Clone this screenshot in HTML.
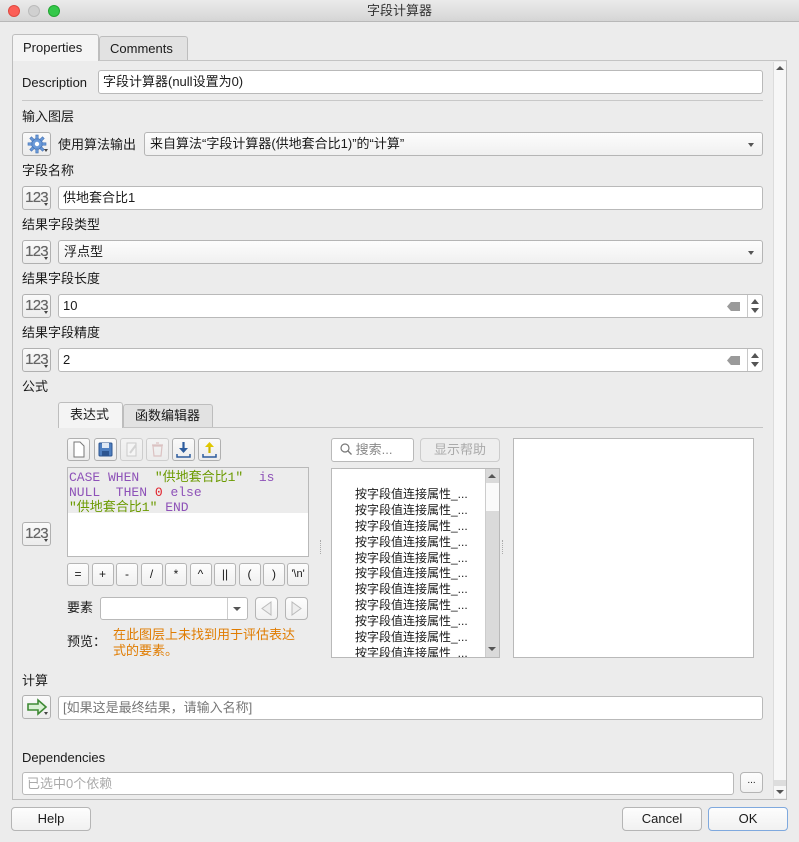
<!DOCTYPE html>
<html><head><meta charset="utf-8"><style>
*{box-sizing:border-box;margin:0;padding:0}
body{width:799px;height:842px;background:#ececec;font-family:"Liberation Sans","Noto Sans CJK SC",sans-serif;font-size:13px;color:#1a1a1a;position:relative;overflow:hidden}
.a{position:absolute}
.lbl{position:absolute;font-size:13px;line-height:16px;white-space:nowrap}
.in{position:absolute;background:#fff;border:1px solid #b9b9b9;border-radius:3px;height:24px;padding-left:4px;line-height:22px;font-size:13px;white-space:nowrap;overflow:hidden}
.cb{position:absolute;background:linear-gradient(#fdfdfd,#f0f0f0);border:1px solid #b5b5b5;border-radius:3px;height:24px;padding-left:5px;line-height:22px;white-space:nowrap}
.cb:after{content:"";position:absolute;right:8px;top:10px;border-left:3.5px solid transparent;border-right:3.5px solid transparent;border-top:4px solid #555}
.btn{position:absolute;background:linear-gradient(#fdfdfd,#f1f1f1);border:1px solid #b5b5b5;border-radius:4px;text-align:center;line-height:22px;font-size:13px}
.ib{position:absolute;width:29px;height:24px;background:linear-gradient(#fafafa,#ececec);border:1px solid #b0b0b0;border-radius:3px;font-size:15px;font-weight:normal;color:#666;text-align:center;line-height:22px;letter-spacing:-0.8px;text-shadow:0 0 0.4px #666}
.ib:after{content:"";position:absolute;right:2px;bottom:3px;border-left:2.5px solid transparent;border-right:2.5px solid transparent;border-top:3px solid #444}
.tb{position:absolute;top:438px;width:23px;height:23px;background:linear-gradient(#fafafa,#ececec);border:1px solid #b0b0b0;border-radius:3px}
.op{position:absolute;top:563px;width:22px;height:23px;background:linear-gradient(#fdfdfd,#f0f0f0);border:1px solid #b5b5b5;border-radius:3px;text-align:center;line-height:21px;font-size:12px}
.clr{position:absolute;right:22px;top:7px;width:13px;height:9px;background:#9a9a9a;clip-path:polygon(30% 0,100% 0,100% 100%,30% 100%,0 50%)}
.spin{position:absolute;right:0;top:0;width:15px;height:22px;border-left:1px solid #c8c8c8}
.spin:before{content:"";position:absolute;left:3px;top:4px;border-left:4px solid transparent;border-right:4px solid transparent;border-bottom:5px solid #555}
.spin:after{content:"";position:absolute;left:3px;top:13px;border-left:4px solid transparent;border-right:4px solid transparent;border-top:5px solid #555}
.code{font-family:"Liberation Mono","Noto Sans CJK SC",monospace;font-size:13px;line-height:15px;white-space:pre}
.li{position:absolute;left:355px;font-size:12px;line-height:16px;white-space:nowrap}
</style></head><body>
<div class="a" style="left:0;top:0;width:799px;height:22px;background:linear-gradient(#ebebeb,#d5d5d5);border-bottom:1px solid #b8b8b8"></div>
<div class="a" style="left:8px;top:5px;width:12px;height:12px;border-radius:50%;background:#fc5f57;border:1px solid #de4a41"></div>
<div class="a" style="left:28px;top:5px;width:12px;height:12px;border-radius:50%;background:#d0d0d0;border:1px solid #bbb"></div>
<div class="a" style="left:48px;top:5px;width:12px;height:12px;border-radius:50%;background:#34c84a;border:1px solid #22a532"></div>
<div class="lbl" style="left:0;width:799px;text-align:center;top:3px;color:#333">字段计算器</div>

<div class="a" style="left:12px;top:60px;width:775px;height:740px;border:1px solid #bdbdbd;border-top:1px solid #c4c4c4"></div>
<div class="a" style="left:12px;top:34px;width:87px;height:27px;background:#f4f4f4;border:1px solid #bdbdbd;border-bottom:none;border-radius:3px 3px 0 0"></div>
<div class="lbl" style="left:23px;top:40px">Properties</div>
<div class="a" style="left:99px;top:36px;width:89px;height:24px;background:#e2e2e2;border:1px solid #bdbdbd;border-bottom:none;border-radius:3px 3px 0 0"></div>
<div class="lbl" style="left:110px;top:41px">Comments</div>

<div class="a" style="left:773px;top:62px;width:13px;height:736px;background:#f7f7f7;border-left:1px solid #dcdcdc"></div>
<div class="a" style="left:776px;top:66px;border-left:4px solid transparent;border-right:4px solid transparent;border-bottom:4px solid #555"></div>
<div class="a" style="left:774px;top:780px;width:12px;height:6px;background:#ddd"></div>
<div class="a" style="left:776px;top:790px;border-left:4px solid transparent;border-right:4px solid transparent;border-top:4px solid #555"></div>

<div class="lbl" style="left:22px;top:75px">Description</div>
<div class="in" style="left:98px;top:70px;width:665px">字段计算器(null设置为0)</div>
<div class="a" style="left:22px;top:100px;width:741px;height:1px;background:#c8c8c8"></div>

<div class="lbl" style="left:22px;top:109px">输入图层</div>
<div class="ib" style="left:22px;top:132px">
<svg width="22" height="20" viewBox="0 0 22 20" style="margin-top:1px"><g fill="#6b9ad8" stroke="#3f6fb5" stroke-width="0.6"><circle cx="11" cy="10" r="5.5"/><g id="t"><rect x="9.8" y="1" width="2.4" height="4"/><rect x="9.8" y="15" width="2.4" height="4"/></g><use href="#t" transform="rotate(45 11 10)"/><use href="#t" transform="rotate(90 11 10)"/><use href="#t" transform="rotate(135 11 10)"/></g><circle cx="11" cy="10" r="2.2" fill="#fff"/></svg></div>
<div class="lbl" style="left:58px;top:137px">使用算法输出</div>
<div class="cb" style="left:144px;top:132px;width:619px">来自算法“字段计算器(供地套合比1)”的“计算”</div>

<div class="lbl" style="left:22px;top:163px">字段名称</div>
<div class="ib" style="left:22px;top:186px">123</div>
<div class="in" style="left:58px;top:186px;width:705px">供地套合比1</div>

<div class="lbl" style="left:22px;top:217px">结果字段类型</div>
<div class="ib" style="left:22px;top:240px">123</div>
<div class="cb" style="left:58px;top:240px;width:705px">浮点型</div>

<div class="lbl" style="left:22px;top:271px">结果字段长度</div>
<div class="ib" style="left:22px;top:294px">123</div>
<div class="in" style="left:58px;top:294px;width:705px">10<span class="clr"></span><span class="spin"></span></div>

<div class="lbl" style="left:22px;top:325px">结果字段精度</div>
<div class="ib" style="left:22px;top:348px">123</div>
<div class="in" style="left:58px;top:348px;width:705px">2<span class="clr"></span><span class="spin"></span></div>

<div class="lbl" style="left:22px;top:379px">公式</div>
<div class="a" style="left:58px;top:427px;width:705px;height:1px;background:#c4c4c4"></div>
<div class="a" style="left:58px;top:402px;width:65px;height:26px;background:#f4f4f4;border:1px solid #bdbdbd;border-bottom:none;border-radius:3px 3px 0 0"></div>
<div class="lbl" style="left:70px;top:407px">表达式</div>
<div class="a" style="left:123px;top:404px;width:90px;height:23px;background:#e2e2e2;border:1px solid #bdbdbd;border-bottom:none;border-radius:3px 3px 0 0"></div>
<div class="lbl" style="left:135px;top:408px">函数编辑器</div>

<div class="tb" style="left:67px"><svg width="21" height="21"><path d="M6 3h6l4 4v11H6z" fill="#fff" stroke="#777"/></svg></div>
<div class="tb" style="left:94px"><svg width="21" height="21"><rect x="4" y="4" width="13" height="13" rx="1" fill="#4f7fc0" stroke="#2d5590"/><rect x="7" y="4" width="7" height="5" fill="#dfe8f4"/><rect x="7" y="12" width="7" height="5" fill="#2d5590"/></svg></div>
<div class="tb" style="left:120px;opacity:.5"><svg width="21" height="21"><path d="M6 4h9v13H6z" fill="#fff" stroke="#aaa"/><path d="M9 14l6-8" stroke="#bbb" stroke-width="2"/></svg></div>
<div class="tb" style="left:146px;opacity:.5"><svg width="21" height="21"><path d="M6 7h9l-1 10H7z M5 6h11 M9 4h3" fill="none" stroke="#c99" stroke-width="1.2"/></svg></div>
<div class="tb" style="left:172px"><svg width="21" height="21"><path d="M10.5 3v9" stroke="#2d5c9e" stroke-width="2.2"/><path d="M6 9l4.5 5 4.5-5z" fill="#2d5c9e"/><path d="M4 15v3h13v-3" fill="none" stroke="#2d5c9e" stroke-width="1.5"/></svg></div>
<div class="tb" style="left:198px"><svg width="21" height="21"><path d="M10.5 14V6" stroke="#c9b300" stroke-width="2.2"/><path d="M6 8l4.5-5 4.5 5z" fill="#e1c800"/><path d="M4 15v3h13v-3" fill="none" stroke="#2d5c9e" stroke-width="1.5"/></svg></div>

<div class="a" style="left:67px;top:467px;width:242px;height:90px;background:#fff;border:1px solid #b9b9b9"></div>
<div class="a" style="left:68px;top:468px;width:240px;height:45px;background:#ececec"></div>
<div class="a code" style="left:69px;top:470px;color:#8e52b8">CASE WHEN  <span style="color:#6b9a00">"供地套合比1"</span>  is
NULL  THEN <span style="color:#e0202a">0</span> else
<span style="color:#6b9a00">"供地套合比1"</span> END</div>

<div class="ib" style="left:22px;top:522px">123</div>

<div class="op" style="left:67px">=</div><div class="op" style="left:91.5px">+</div><div class="op" style="left:116px">-</div><div class="op" style="left:140.5px">/</div><div class="op" style="left:165px">*</div><div class="op" style="left:189.5px">^</div><div class="op" style="left:214px">||</div><div class="op" style="left:238.5px">(</div><div class="op" style="left:263px">)</div><div class="op" style="left:287px;font-size:11px">'\n'</div>

<div class="lbl" style="left:67px;top:600px">要素</div>
<div class="in" style="left:100px;top:597px;width:148px;height:23px"><span style="position:absolute;right:0;top:0;width:20px;height:21px;border-left:1px solid #ccc"></span><span style="position:absolute;right:6px;top:9px;border-left:4px solid transparent;border-right:4px solid transparent;border-top:4px solid #555"></span></div>
<div class="btn" style="left:255px;top:597px;width:23px;height:23px"><svg width="21" height="21"><path d="M15 4v13L6 10.5z" fill="#eee" stroke="#bbb"/></svg></div>
<div class="btn" style="left:285px;top:597px;width:23px;height:23px"><svg width="21" height="21"><path d="M6 4v13l9-6.5z" fill="#eee" stroke="#bbb"/></svg></div>
<div class="lbl" style="left:67px;top:634px">预览：</div>
<div class="lbl" style="left:113px;top:627px;color:#e07c00;line-height:16px">在此图层上未找到用于评估表达<br>式的要素。</div>

<div class="a" style="left:320px;top:540px;width:1px;height:14px;border-left:1px dotted #aaa"></div>
<div class="a" style="left:502px;top:540px;width:1px;height:14px;border-left:1px dotted #aaa"></div>

<div class="in" style="left:331px;top:438px;width:83px;height:24px;color:#888;padding-left:8px"><svg width="12" height="12" style="vertical-align:-1px"><circle cx="5" cy="5" r="4" fill="none" stroke="#777" stroke-width="1.2"/><path d="M8 8l3.5 3.5" stroke="#777" stroke-width="1.3"/></svg> 搜索...</div>
<div class="btn" style="left:420px;top:438px;width:80px;height:24px;color:#aaa;background:#eeeeee;border-color:#ccc">显示帮助</div>

<div class="a" style="left:331px;top:468px;width:169px;height:190px;background:#fff;border:1px solid #b9b9b9;overflow:hidden">
<div class="a" style="left:153px;top:0;width:14px;height:188px;background:#dadada;border-left:1px solid #ccc"></div>
<div class="a" style="left:154px;top:14px;width:13px;height:28px;background:#fafafa"></div>
<div class="a" style="left:156px;top:5px;border-left:4px solid transparent;border-right:4px solid transparent;border-bottom:4px solid #555"></div>
<div class="a" style="left:156px;top:178px;border-left:4px solid transparent;border-right:4px solid transparent;border-top:4px solid #555"></div>
</div>
<div class="li" style="top:486px">按字段值连接属性_...</div>
<div class="li" style="top:502px">按字段值连接属性_...</div>
<div class="li" style="top:518px">按字段值连接属性_...</div>
<div class="li" style="top:534px">按字段值连接属性_...</div>
<div class="li" style="top:550px">按字段值连接属性_...</div>
<div class="li" style="top:565px">按字段值连接属性_...</div>
<div class="li" style="top:581px">按字段值连接属性_...</div>
<div class="li" style="top:597px">按字段值连接属性_...</div>
<div class="li" style="top:613px">按字段值连接属性_...</div>
<div class="li" style="top:629px">按字段值连接属性_...</div>
<div class="a" style="left:355px;top:645px;height:12px;overflow:hidden;font-size:12px;line-height:16px;white-space:nowrap">按字段值连接属性_...</div>

<div class="a" style="left:513px;top:438px;width:241px;height:220px;background:#fff;border:1px solid #b9b9b9"></div>

<div class="lbl" style="left:22px;top:673px">计算</div>
<div class="ib" style="left:22px;top:695px"><svg width="24" height="20" style="margin-top:1px"><path d="M3 7h10V3l8 7-8 7v-4H3z" fill="#d9f0d4" stroke="#3f8a35" stroke-width="1.6"/></svg></div>
<div class="in" style="left:58px;top:696px;width:705px;color:#777">[如果这是最终结果，请输入名称]</div>

<div class="lbl" style="left:22px;top:750px">Dependencies</div>
<div class="in" style="left:22px;top:772px;width:712px;height:23px;color:#aaa">已选中0个依赖</div>
<div class="btn" style="left:740px;top:772px;width:23px;height:21px;line-height:16px;font-size:10px">...</div>

<div class="btn" style="left:11px;top:807px;width:80px;height:24px">Help</div>
<div class="btn" style="left:622px;top:807px;width:80px;height:24px">Cancel</div>
<div class="btn" style="left:708px;top:807px;width:80px;height:24px;border-color:#7fa9de">OK</div>
</body></html>
